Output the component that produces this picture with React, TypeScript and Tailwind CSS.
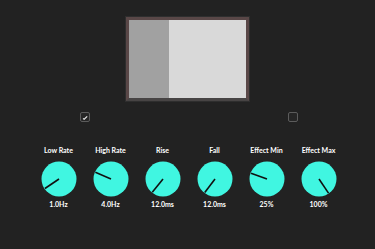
import React from "react";

const knobs = [
  { label: "Low Rate", value: "1.0Hz", angle: -124 },
  { label: "High Rate", value: "4.0Hz", angle: -67 },
  { label: "Rise", value: "12.0ms", angle: -141 },
  { label: "Fall", value: "12.0ms", angle: -143 },
  { label: "Effect Min", value: "25%", angle: -70 },
  { label: "Effect Max", value: "100%", angle: 146 },
];

function Knob({ angle }: { angle: number }) {
  const r = 17;
  const rad = (angle * Math.PI) / 180;
  const x2 = 18 + Math.sin(rad) * r;
  const y2 = 18 - Math.cos(rad) * r;
  return (
    <svg width="36" height="36" viewBox="0 0 36 36">
      <circle cx="18" cy="18" r="17.5" fill="#40f6e1" />
      <line x1="18" y1="18" x2={x2} y2={y2} stroke="#111" strokeWidth="1.6" />
    </svg>
  );
}

function Checkbox({ checked }: { checked: boolean }) {
  return (
    <div className="w-[10px] h-[10px] rounded-[2px] border border-[#5c5c5c] bg-[#262626] flex items-center justify-center">
      {checked && (
        <svg width="8" height="8" viewBox="0 0 8 8">
          <path d="M2 5.5 L3.2 6.3 L6.2 3.4" stroke="#e8e8e8" strokeWidth="1.2" fill="none" />
        </svg>
      )}
    </div>
  );
}

export default function App() {
  return (
    <div
      className="w-[375px] h-[249px] bg-[#222222] flex flex-col items-center overflow-hidden"
      style={{ fontFamily: "Lato, 'Liberation Sans', sans-serif" }}
    >
      <div className="mt-[17px] w-[123px] h-[84px] border-[3px] border-[#594747] border-b-[#474444] flex shadow-[0_0_0_1px_#2e2e2e]">
        <div className="w-[40px] h-full bg-[#a1a1a1]" />
        <div className="flex-1 h-full bg-[#d9d9d9]" />
      </div>
      <div className="mt-[11px] flex ml-[2px]">
        <div className="w-[104px] flex justify-center">
          <Checkbox checked />
        </div>
        <div className="w-[104px]" />
        <div className="w-[104px] flex justify-center">
          <Checkbox checked={false} />
        </div>
      </div>
      <div className="mt-[24px] flex ml-[2px]">
        {knobs.map((k) => (
          <div key={k.label} className="w-[52px] flex flex-col items-center">
            <div className="h-[8px] leading-[8px] text-[7px] font-bold text-white whitespace-nowrap">
              {k.label}
            </div>
            <div className="mt-[7px]">
              <Knob angle={k.angle} />
            </div>
            <div className="mt-[3px] h-[8px] leading-[8px] text-[7px] font-bold text-white whitespace-nowrap">
              {k.value}
            </div>
          </div>
        ))}
      </div>
    </div>
  );
}
